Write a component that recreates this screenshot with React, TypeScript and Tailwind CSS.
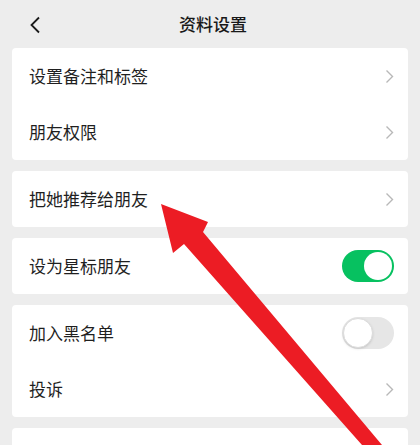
import { ReactNode } from 'react';

function Chevron() {
  return (
    <svg width="9" height="15" viewBox="0 0 9 15" className="shrink-0">
      <path d="M1.5 1.5 L7.5 7.5 L1.5 13.5" fill="none" stroke="#b8b8b8" strokeWidth="1.4" />
    </svg>
  );
}

function Toggle({ on }: { on: boolean }) {
  if (on) {
    return (
      <div className="flex h-[32px] w-[52px] items-center justify-end rounded-full bg-[#07c160] p-[2px]">
        <div className="h-[28px] w-[28px] rounded-full bg-white" />
      </div>
    );
  }
  return (
    <div className="flex h-[32px] w-[52px] items-center justify-start rounded-full bg-[#e6e6e6] p-[1px]">
      <div className="h-[30px] w-[30px] rounded-full border border-[#dcdcdc] bg-white shadow-sm" />
    </div>
  );
}

function Row({ label, right }: { label: string; right?: ReactNode }) {
  return (
    <div className="flex h-[56px] items-center justify-between pl-[17px] pr-[14px]">
      <span className="text-[17px] text-[#1f1f1f]">{label}</span>
      {right ?? <Chevron />}
    </div>
  );
}

function Card({ children }: { children?: ReactNode }) {
  return <div className="rounded-[4px] bg-white">{children}</div>;
}

export default function App() {
  return (
    <div
      className="relative h-[445px] w-[420px] overflow-hidden bg-[#ededed]"
      style={{ fontFamily: '"Noto Sans CJK SC", "Noto Sans", sans-serif' }}
    >
      <div className="relative flex h-[48px] items-center justify-center">
        <svg width="12" height="18" viewBox="0 0 12 18" className="absolute left-[29px] top-[16px]">
          <path d="M10 1.5 L2.5 9 L10 16.5" fill="none" stroke="#1a1a1a" strokeWidth="1.8" />
        </svg>
        <span className="pl-[6px] text-[17px] font-medium text-[#191919]">资料设置</span>
      </div>

      <div className="flex flex-col gap-[11px] px-[12px]">
        <Card>
          <Row label="设置备注和标签" />
          <Row label="朋友权限" />
        </Card>
        <Card>
          <Row label="把她推荐给朋友" />
        </Card>
        <Card>
          <Row label="设为星标朋友" right={<Toggle on />} />
        </Card>
        <Card>
          <Row label="加入黑名单" right={<Toggle on={false} />} />
          <Row label="投诉" />
        </Card>
        <Card>
          <div className="h-[56px]" />
        </Card>
      </div>

      {/* red annotation arrow over the list */}
      <svg className="pointer-events-none absolute inset-0" width="420" height="445" viewBox="0 0 420 445">
        <polygon points="161,204 208,222 203,232 382,445 362,445 184,244 173,253" fill="#ec1c24" />
      </svg>
    </div>
  );
}
